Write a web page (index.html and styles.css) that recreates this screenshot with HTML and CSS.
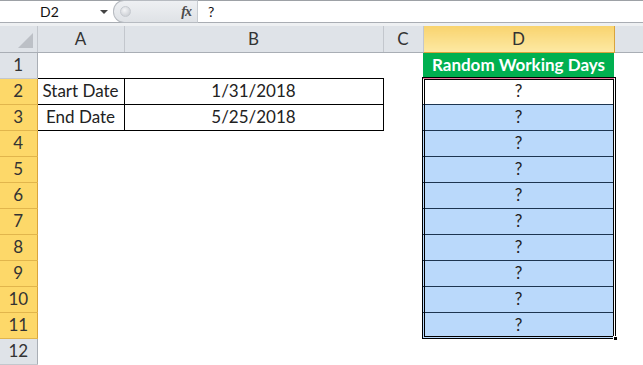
FILE: index.html
```html
<!doctype html>
<html lang="en">
  <head>
    <meta charset="UTF-8" />
    <title>Random Working Days</title>
    <link rel="stylesheet" href="styles.css">
  </head>
  <body>
    <div class="formula-bar">
      <div class="name-box">
        <span class="name-ref">D2</span>
        <span class="name-arrow"></span>
      </div>
      <div class="fx-pill">
        <span class="fx-dot"></span>
        <span class="fx">fx</span>
      </div>
      <div class="formula-input">?</div>
    </div>
    <div class="bar-gap"></div>

    <div class="sheet">
      <table class="grid">
        <colgroup>
          <col class="c-row">
          <col class="c-a">
          <col class="c-b">
          <col class="c-c">
          <col class="c-d">
          <col class="c-e">
        </colgroup>
        <tr class="col-heads">
          <th class="corner"><span class="corner-tri"></span></th>
          <th>A</th>
          <th>B</th>
          <th>C</th>
          <th class="active">D</th>
          <th></th>
        </tr>
        <tr>
          <th class="row-head">1</th>
          <td></td><td></td><td></td>
          <td class="title-cell">Random Working Days</td>
          <td></td>
        </tr>
        <tr>
          <th class="row-head active">2</th>
          <td class="boxed">Start Date</td>
          <td class="boxed">1/31/2018</td>
          <td></td>
          <td class="pick first">?</td>
          <td></td>
        </tr>
        <tr>
          <th class="row-head active">3</th>
          <td class="boxed">End Date</td>
          <td class="boxed">5/25/2018</td>
          <td></td>
          <td class="pick">?</td>
          <td></td>
        </tr>
        <tr><th class="row-head active">4</th><td></td><td></td><td></td><td class="pick">?</td><td></td></tr>
        <tr><th class="row-head active">5</th><td></td><td></td><td></td><td class="pick">?</td><td></td></tr>
        <tr><th class="row-head active">6</th><td></td><td></td><td></td><td class="pick">?</td><td></td></tr>
        <tr><th class="row-head active">7</th><td></td><td></td><td></td><td class="pick">?</td><td></td></tr>
        <tr><th class="row-head active">8</th><td></td><td></td><td></td><td class="pick">?</td><td></td></tr>
        <tr><th class="row-head active">9</th><td></td><td></td><td></td><td class="pick">?</td><td></td></tr>
        <tr><th class="row-head active">10</th><td></td><td></td><td></td><td class="pick">?</td><td></td></tr>
        <tr><th class="row-head active">11</th><td></td><td></td><td></td><td class="pick">?</td><td></td></tr>
        <tr><th class="row-head">12</th><td></td><td></td><td></td><td></td><td></td></tr>
      </table>

      <!-- selection outline over D2:D11 -->
      <div class="selection"><span class="fill-handle"></span></div>
    </div>
  </body>
</html>
```

FILE: styles.css
```css
* {
  margin: 0;
  padding: 0;
  box-sizing: border-box;
}

body {
  font-family: Lato, 'Liberation Sans', sans-serif;
  background: white;
  color: #222;
  width: 643px;
  overflow: hidden;
}

/* formula bar */

.formula-bar {
  display: flex;
  height: 23px;
  border-top: 1px solid #9da1a6;
  border-bottom: 1px solid #a9adb3;
  background: white;
}

.name-box {
  width: 113px;
  display: flex;
  align-items: center;
  position: relative;
}

.name-ref {
  font-size: 14px;
  padding-left: 40px;
  color: #111;
}

.name-arrow {
  position: absolute;
  left: 100px;
  top: 9px;
  border-left: 4px solid transparent;
  border-right: 4px solid transparent;
  border-top: 4px solid #444;
}

.fx-pill {
  width: 85px;
  display: flex;
  align-items: center;
  justify-content: space-between;
  padding: 0 6px 0 6px;
  background: linear-gradient(#eef0f3, #dfe2e6);
  border: 1px solid #b7bbc1;
  border-right-color: #c8ccd1;
  border-radius: 11px 0 0 11px;
  margin-top: -1px;
  height: 23px;
}

.fx-dot {
  width: 11px;
  height: 11px;
  border-radius: 50%;
  background: radial-gradient(circle at 40% 35%, #f4f5f7, #c2c6cc);
  border: 1px solid #c6cad0;
}

.fx {
  font-family: 'Liberation Serif', serif;
  font-style: italic;
  font-weight: bold;
  font-size: 14px;
  color: #4a4a4a;
  letter-spacing: -1px;
}

.formula-input {
  flex: 1;
  font-size: 14px;
  padding-left: 10px;
  line-height: 21px;
  color: #111;
}

.bar-gap {
  height: 3px;
  background: #eef0f2;
}

/* sheet grid */

.sheet {
  position: relative;
}

.grid {
  border-collapse: collapse;
  table-layout: fixed;
  width: 643px;
  font-size: 17px;
}

.c-row { width: 37px; }
.c-a { width: 87px; }
.c-b { width: 259px; }
.c-c { width: 40px; }
.c-d { width: 191px; }
.c-e { width: 29px; }

.grid tr {
  height: 26px;
}

.grid th,
.grid td {
  height: 26px;
  line-height: 20px;
  text-align: center;
  vertical-align: middle;
  white-space: nowrap;
  overflow: hidden;
}

.col-heads th {
  font-weight: normal;
  color: #333;
  background: #dfe3e8;
  border-right: 1px solid #c3c7cd;
  border-bottom: 1px solid #a9aeb5;
}

.col-heads th.active {
  background: linear-gradient(#f8d36e, #fde9a3);
  border-right: 1px solid #d9a43c;
  border-bottom: 1px solid #d9a43c;
}

.corner {
  position: relative;
}

.corner-tri {
  position: absolute;
  right: 4px;
  bottom: 4px;
  width: 0;
  height: 0;
  border-left: 15px solid transparent;
  border-bottom: 15px solid #bcc0c6;
}

.row-head {
  font-weight: normal;
  color: #333;
  background: #dfe3e8;
  border-right: 1px solid #a9aeb5;
  border-bottom: 1px solid #c3c7cd;
}

.row-head.active {
  background: #fdd869;
  border-bottom: 1px solid #e1b54c;
  border-right: 1px solid #d9a43c;
}

.boxed {
  border: 1px solid #000;
}

.title-cell {
  background: #00b050;
  color: white;
  font-weight: bold;
  border-bottom: 1px solid #e8739a;
}

.pick {
  background: #bad9fb;
  border-top: 1px solid #1d3550;
  border-bottom: 1px solid #1d3550;
}

.pick.first {
  background: white;
}

.selection {
  position: absolute;
  left: 422px;
  top: 51px;
  width: 194px;
  height: 262px;
  border: 3px double #000;
  pointer-events: none;
}

.fill-handle {
  position: absolute;
  right: -5px;
  bottom: -5px;
  width: 5px;
  height: 5px;
  background: #000;
  border: 1px solid white;
}
```
